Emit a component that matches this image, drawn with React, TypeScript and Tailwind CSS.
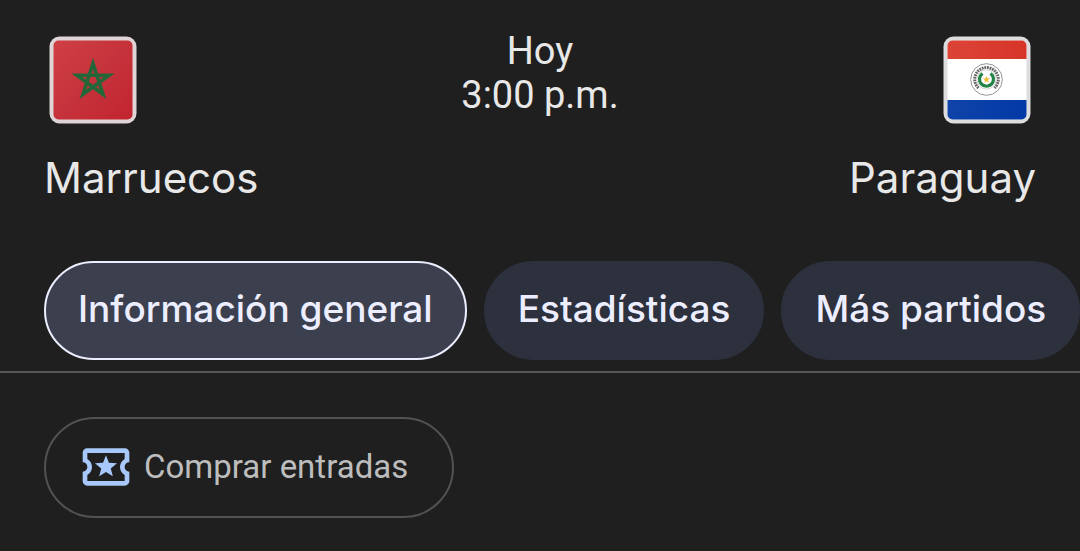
import React from "react";

function MoroccoFlag() {
  return (
    <svg viewBox="0 0 88 88" className="mx-[5px] size-22" role="img" aria-label="Marruecos">
      <defs>
        <linearGradient id="red" x1="0" y1="0" x2="1" y2="1">
          <stop offset="0" stopColor="#cf4045" />
          <stop offset="0.55" stopColor="#c5313a" />
          <stop offset="1" stopColor="#c2242e" />
        </linearGradient>
      </defs>
      <rect x="0.5" y="0.5" width="87" height="87" rx="10" fill="#dfd5d6" />
      <rect x="4.5" y="4.5" width="79" height="79" rx="5" fill="url(#red)" />
      <path
        d="M44 27.5 54 58.3 27.8 39.2H60.2L34 58.3Z"
        fill="none"
        stroke="#246638"
        strokeWidth="3.6"
        strokeMiterlimit="6"
      />
    </svg>
  );
}

function ParaguayFlag() {
  return (
    <svg viewBox="0 0 88 88" className="mx-[5px] size-22" role="img" aria-label="Paraguay">
      <defs>
        <clipPath id="field">
          <rect x="4.5" y="4.5" width="79" height="79" rx="5" />
        </clipPath>
        <linearGradient id="top" x1="0" y1="0" x2="1" y2="0">
          <stop offset="0" stopColor="#dc4538" />
          <stop offset="1" stopColor="#d63427" />
        </linearGradient>
        <linearGradient id="bottom" x1="0" y1="0" x2="1" y2="0">
          <stop offset="0" stopColor="#1144a9" />
          <stop offset="1" stopColor="#0038a6" />
        </linearGradient>
      </defs>
      <rect x="0.5" y="0.5" width="87" height="87" rx="10" fill="#dddddf" />
      <g clipPath="url(#field)">
        <rect width="88" height="88" fill="#fff" />
        <rect width="88" height="23" fill="url(#top)" />
        <rect y="64" width="88" height="24" fill="url(#bottom)" />
      </g>
      <circle cx="43.5" cy="43.5" r="15.8" fill="#fff" stroke="#888" strokeWidth="0.9" />
      <path
        d="M35.5 52A11.8 11.8 0 1 1 51.5 52"
        fill="none"
        stroke="#666"
        strokeWidth="3"
        strokeDasharray="1.8 0.8"
      />
      <circle cx="43.5" cy="43.5" r="9.6" fill="#fff" stroke="#bbb" strokeWidth="0.6" />
      <path d="M39.5 37.5a7 7 0 1 0 8 0" fill="none" stroke="#238447" strokeWidth="3.2" />
      <path d="m43.5 39.8 1 2.5 2.6.1-2 1.7.7 2.6-2.3-1.5-2.3 1.5.7-2.6-2-1.7 2.6-.1Z" fill="#e8c23c" />
    </svg>
  );
}

function TicketIcon() {
  return (
    <svg viewBox="0 0 24 24" className="size-14 shrink-0" fill="#a8c7fa" aria-hidden="true">
      <path d="M22 10V6c0-1.1-.9-2-2-2H4c-1.1 0-1.99.9-1.99 2v4c1.1 0 1.99.9 1.99 2s-.89 2-2 2v4c0 1.1.9 2 2 2h16c1.1 0 2-.9 2-2v-4c-1.1 0-2-.9-2-2s.9-2 2-2zm-2-1.46c-1.19.69-2 1.99-2 3.46s.81 2.77 2 3.46V18H4v-2.54c1.19-.69 2-1.99 2-3.46 0-1.48-.8-2.77-1.99-3.46L4 6h16v2.54z" />
      <path d="M9.07 16 12 14.12 14.93 16l-.89-3.36 2.69-2.2-3.47-.21L12 7l-1.27 3.23-3.47.21 2.69 2.2z" />
    </svg>
  );
}

const tabs = ["Información general", "Estadísticas", "Más partidos"];

export default function App() {
  const [active, setActive] = React.useState(0);
  return (
    <main className="min-h-screen overflow-hidden bg-[#1f1f1f] pt-9 font-[Roboto,sans-serif] text-[#e8e8e8]">
      <header className="grid grid-cols-[1fr_auto_1fr] px-11">
        <div className="flex flex-col items-start gap-7">
          <MoroccoFlag />
          <h2 className="font-[Inter,sans-serif] text-[42px] leading-[52px]">Marruecos</h2>
        </div>
        <p className="-mt-[7px] text-center text-[38px] leading-11">
          Hoy
          <br />
          3:00 p.m.
        </p>
        <div className="flex flex-col items-end gap-7">
          <ParaguayFlag />
          <h2 className="font-[Inter,sans-serif] text-[42px] leading-[52px]">Paraguay</h2>
        </div>
      </header>

      <nav className="mt-[57px] flex gap-[17px] overflow-hidden border-b-2 border-[#55575a] pb-[11px] pl-11">
        {tabs.map((tab, i) => (
          <button
            key={tab}
            type="button"
            aria-pressed={i === active}
            onClick={() => setActive(i)}
            className={
              "shrink-0 rounded-full border-2 px-8 pt-[22px] pb-[26px] font-[Inter,sans-serif] text-[37px] leading-[47px] font-medium whitespace-nowrap text-[#eceeff] " +
              (i === active ? "border-[#eceeff] bg-[#3b3f4e]" : "border-[#2d303d] bg-[#2d303d]")
            }
          >
            {tab}
          </button>
        ))}
      </nav>

      <section className="px-11 pt-11 pb-8">
        <button
          type="button"
          className="flex items-center gap-[10px] rounded-full border-2 border-[#505254] pt-5 pb-[21px] pr-11 pl-8 text-[33px] leading-10 text-[#bdbdbd]"
        >
          <TicketIcon />
          Comprar entradas
        </button>
      </section>
    </main>
  );
}
